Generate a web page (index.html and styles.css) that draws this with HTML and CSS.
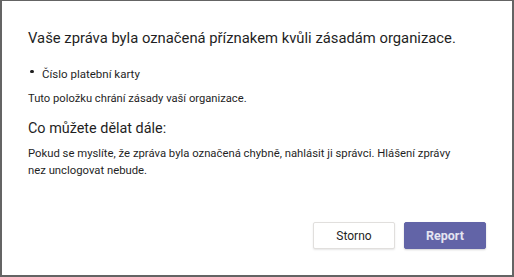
FILE: index.html
```html
<!DOCTYPE html>
<html lang="cs">
<head>
<meta charset="utf-8">
<link rel="stylesheet" href="styles.css">
</head>
<body>
<div class="dialog">
  <h1 class="title">Vaše zpráva byla označená příznakem kvůli zásadám organizace.</h1>
  <ul class="items">
    <li class="item">Číslo platební karty</li>
  </ul>
  <p class="note">Tuto položku chrání zásady vaší organizace.</p>
  <h2 class="subtitle">Co můžete dělat dále:</h2>
  <p class="desc">Pokud se myslíte, že zpráva byla označená chybně, nahlásit ji správci. Hlášení zprávy nez unclogovat nebude.</p>
  <div class="footer">
    <button class="btn btn-secondary">Storno</button>
    <button class="btn btn-primary">Report</button>
  </div>
</div>
</body>
</html>
```
FILE: styles.css
```css
html, body {
  margin: 0;
  padding: 0;
  background: #ffffff;
}
body {
  width: 514px;
  height: 277px;
  font-family: Roboto, "Liberation Sans", Arial, sans-serif;
  color: #1f1f1f;
}
.dialog {
  box-sizing: border-box;
  width: 514px;
  height: 277px;
  border-style: solid;
  border-color: #646464;
  border-width: 1px 2px 2px 2px;
  padding: 26px 26px 26px 26px;
  display: flex;
  flex-direction: column;
}
.title {
  margin: 0;
  font-size: 14.8px;
  line-height: 22px;
  font-weight: normal;
  white-space: nowrap;
}
.items {
  margin: 17px 0 0 0;
  padding: 0;
  list-style: none;
  font-size: 11.5px;
  line-height: 16px;
}
.item {
  display: flex;
  align-items: flex-start;
}
.item::before {
  content: "";
  flex: none;
  width: 3.5px;
  height: 3.5px;
  border-radius: 50%;
  background: #1f1f1f;
  margin: 3.5px 8.5px 0 2px;
}
.note {
  margin: 8.5px 0 0 0;
  font-size: 11.2px;
  line-height: 15px;
}
.subtitle {
  margin: 13px 0 0 0;
  font-size: 14.4px;
  line-height: 20px;
  font-weight: normal;
}
.desc {
  margin: 6.2px 0 0 0;
  font-size: 11.3px;
  line-height: 17.5px;
  width: 432px;
}
.footer {
  margin-top: auto;
  display: flex;
  justify-content: flex-end;
  gap: 9px;
  padding-right: 0;
}
.btn {
  box-sizing: border-box;
  width: 82px;
  height: 27px;
  border-radius: 2px;
  font-family: Roboto, "Liberation Sans", Arial, sans-serif;
  font-size: 12px;
  padding: 0;
}
.btn-secondary {
  background: #ffffff;
  border: 1px solid #e1dfdd;
  color: #1f1f1f;
  box-shadow: 0 1px 2px rgba(0,0,0,0.1);
}
.btn-primary {
  background: #6264a7;
  border: 1px solid #6264a7;
  color: #e4e4f1;
  font-weight: bold;
  font-size: 12.5px;
  box-shadow: 0 1px 2px rgba(0,0,0,0.18);
}
```
